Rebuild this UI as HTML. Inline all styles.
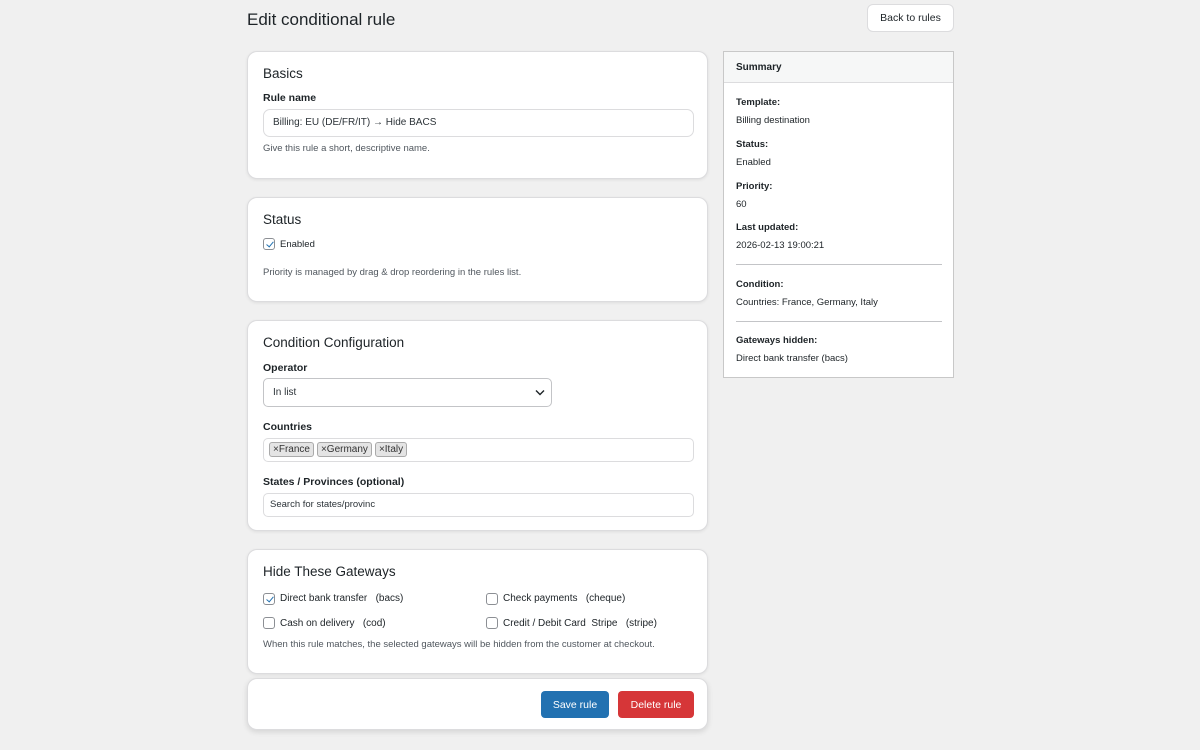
<!DOCTYPE html>
<html><head><meta charset="utf-8"><style>
*{box-sizing:border-box;margin:0;padding:0}
body{width:1200px;height:750px;background:#f0f0f0;font-family:"Liberation Sans",sans-serif;color:#1d2327;position:relative;overflow:hidden}
.a{position:absolute}
.card{position:absolute;left:247px;width:461px;background:#fff;border:1px solid #dcdcde;border-radius:10px;box-shadow:0 1px 3px rgba(0,0,0,.08)}
h1{position:absolute;left:247px;top:10px;font-size:17px;font-weight:400}
.h2{position:absolute;left:15px;font-size:13.5px;font-weight:400;color:#1d2327}
.lbl{position:absolute;left:15px;font-size:10.5px;font-weight:600}
.sm{position:absolute;left:15px;font-size:9.5px;color:#50575e}
.inp{position:absolute;left:15px;width:431px;border:1px solid #dcdcde;border-radius:5px;background:#fff;font-size:10px;color:#2c3338;padding-left:9px}
.cb{position:absolute;width:12px;height:12px;border:1px solid #8c8f94;border-radius:3px;background:#fff}
.cb.on::after{content:"";position:absolute;left:3.5px;top:0.5px;width:3px;height:6px;border:solid #2271b1;border-width:0 1.6px 1.6px 0;transform:rotate(40deg)}
.t{position:absolute;font-size:10px;color:#1d2327;white-space:nowrap}
.tag{display:inline-block;border:1px solid #aaa;background:#e4e4e4;border-radius:3px;font-size:10px;padding:1px 3px;margin-right:3px;color:#333}
.btn{position:absolute;top:12px;height:27px;border-radius:4px;color:#fff;font-size:10.5px;display:flex;align-items:center;justify-content:center}
.s{position:absolute;left:12px;font-size:9.5px}
.sb{font-weight:600}
</style></head><body>
<h1>Edit conditional rule</h1>
<div class="a" style="left:867px;top:4px;width:87px;height:28px;background:#fff;border:1px solid #dcdcde;border-radius:6px;font-size:10.5px;display:flex;align-items:center;justify-content:center">Back to rules</div>

<div class="card" style="top:51px;height:128px">
<div class="h2" style="top:14px">Basics</div>
<div class="lbl" style="top:40px">Rule name</div>
<div class="inp" style="top:57px;height:28px;line-height:26px;border-radius:7px">Billing: EU (DE/FR/IT) → Hide BACS</div>
<div class="sm" style="top:91px">Give this rule a short, descriptive name.</div>
</div>

<div class="card" style="top:197px;height:105px">
<div class="h2" style="top:14px">Status</div>
<div class="cb on" style="left:15px;top:40px"></div><div class="t" style="left:32px;top:41px;font-size:9.5px">Enabled</div>
<div class="sm" style="top:69px">Priority is managed by drag &amp; drop reordering in the rules list.</div>
</div>

<div class="card" style="top:320px;height:211px">
<div class="h2" style="top:14px">Condition Configuration</div>
<div class="lbl" style="top:41px">Operator</div>
<div class="inp" style="top:57px;height:29px;width:289px;line-height:27px;border-color:#c3c4c7">In list
<svg class="a" style="right:6px;top:10px" width="10" height="7" viewBox="0 0 10 7"><path d="M1 1.5l4 4 4-4" fill="none" stroke="#1d2327" stroke-width="1.4"/></svg></div>
<div class="lbl" style="top:100px">Countries</div>
<div class="inp" style="top:117px;height:24px;padding:3px 5px">
<span class="tag">×France</span><span class="tag">×Germany</span><span class="tag">×Italy</span></div>
<div class="lbl" style="top:155px">States / Provinces (optional)</div>
<div class="inp" style="top:172px;height:24px;line-height:22px;font-size:9.5px;padding-left:6px">Search for states/provinc</div>
</div>

<div class="card" style="top:549px;height:125px">
<div class="h2" style="top:14px">Hide These Gateways</div>
<div class="cb on" style="left:15px;top:43px"></div><div class="t" style="left:32px;top:43px">Direct bank transfer &nbsp; (bacs)</div>
<div class="cb" style="left:238px;top:43px"></div><div class="t" style="left:255px;top:43px">Check payments &nbsp; (cheque)</div>
<div class="cb" style="left:15px;top:67px"></div><div class="t" style="left:32px;top:68px">Cash on delivery &nbsp; (cod)</div>
<div class="cb" style="left:238px;top:67px"></div><div class="t" style="left:255px;top:68px">Credit / Debit Card &nbsp;Stripe &nbsp; (stripe)</div>
<div class="sm" style="top:89px">When this rule matches, the selected gateways will be hidden from the customer at checkout.</div>
</div>

<div class="card" style="top:678px;height:52px;box-shadow:0 2px 6px rgba(0,0,0,.12)">
<div class="btn" style="left:293px;width:68px;background:#2271b1">Save rule</div>
<div class="btn" style="left:370px;width:76px;background:#d63638">Delete rule</div>
</div>

<div class="a" style="left:723px;top:51px;width:231px;height:327px;background:#fff;border:1px solid #c8c8c8">
<div style="height:31px;background:#f6f7f7;border-bottom:1px solid #dcdcde;font-size:10px;font-weight:600;padding:10px 12px">Summary</div>
<div class="s sb" style="top:45px">Template:</div><div class="s" style="top:63px">Billing destination</div>
<div class="s sb" style="top:87px">Status:</div><div class="s" style="top:105px">Enabled</div>
<div class="s sb" style="top:129px">Priority:</div><div class="s" style="top:147px">60</div>
<div class="s sb" style="top:170px">Last updated:</div><div class="s" style="top:188px">2026-02-13 19:00:21</div>
<div class="a" style="left:12px;top:212px;width:206px;height:1px;background:#c3c4c7"></div>
<div class="s sb" style="top:227px">Condition:</div><div class="s" style="top:245px">Countries: France, Germany, Italy</div>
<div class="a" style="left:12px;top:269px;width:206px;height:1px;background:#c3c4c7"></div>
<div class="s sb" style="top:283px">Gateways hidden:</div><div class="s" style="top:301px">Direct bank transfer (bacs)</div>
</div>
</body></html>
